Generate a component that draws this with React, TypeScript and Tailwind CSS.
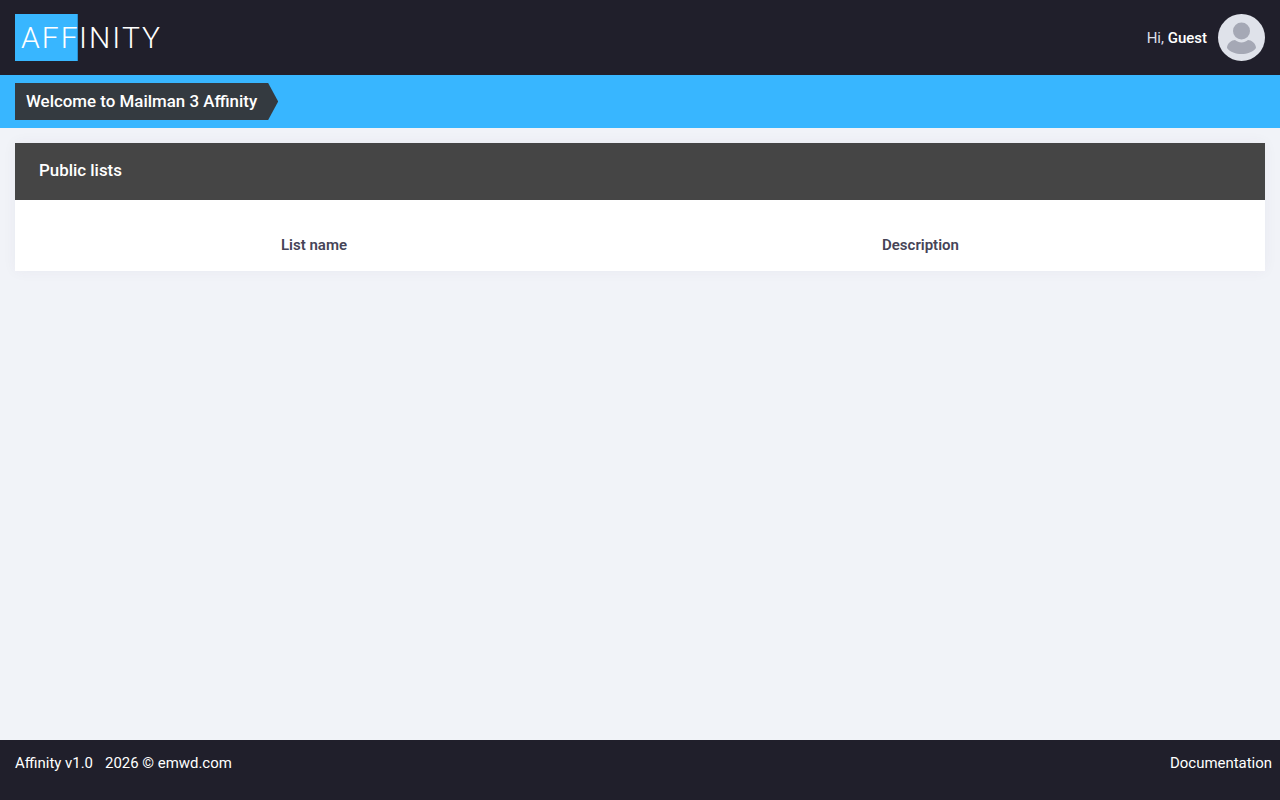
export default function App() {
  return (
    <div className="min-h-[800px] h-[800px] flex flex-col bg-[#f1f3f8] font-['Roboto',sans-serif] overflow-hidden">
      <header className="h-[75px] shrink-0 bg-[#201f2b] flex items-center justify-between px-[15px]">
        <div className="flex items-center h-[47px] text-[30px] font-light tracking-[2px] text-white leading-[47px]">
          <span className="bg-[#38b6ff] h-[47px] w-[63px] pl-[6px] border-r border-[#2a8fd0] whitespace-nowrap">AFF</span>
          <span className="pl-[1px]">INITY</span>
        </div>
        <div className="flex items-center">
          <span className="text-[15px] text-[#dcdfe8] pt-px">Hi,&nbsp;<b className="font-medium text-white">Guest</b></span>
          <div className="ml-[11px] w-[47px] h-[47px] rounded-full bg-[#dfe2ea] overflow-hidden">
            <svg viewBox="0 0 47 47" className="w-full h-full">
              <circle cx="23.5" cy="17" r="8.5" fill="#a5a8b5" />
              <path d="M9 34c0-5 5-8 8-8 2 1.500 4 2.500 6.500 2.500S28 27.500 30 26c3 0 8 3 8 8-3 4-9 6-14.500 6S12 38 9 34z" fill="#a5a8b5" />
            </svg>
          </div>
        </div>
      </header>
      <div className="h-[53px] shrink-0 bg-[#38b6ff] flex items-center px-[15px]">
        <div className="h-[37px] pl-[11px] pr-[21px] bg-[#343a40] text-white font-medium text-[16.9px] flex items-center [clip-path:polygon(0_0,calc(100%-10px)_0,100%_50%,calc(100%-10px)_100%,0_100%)]">
          Welcome to Mailman 3 Affinity
        </div>
      </div>
      <main className="flex-1 p-[15px]">
        <section className="bg-white shadow-[0_0_13px_0_rgba(82,63,105,0.05)]">
          <div className="h-[57px] bg-[#454545] flex items-center px-6 pb-px text-white font-medium text-[16.9px]">Public lists</div>
          <div className="h-[71px] grid grid-cols-[601px_1fr] pt-[34px] text-[15px] font-semibold text-[#464457]">
            <div className="pl-[266px]">List name</div>
            <div className="pl-[266px]">Description</div>
          </div>
        </section>
      </main>
      <footer className="h-[60px] shrink-0 bg-[#201f2b] text-white text-[14.95px] flex justify-between pl-[15px] pr-2 pt-3">
        <div className="flex gap-3"><span>Affinity v1.0</span><span>2026 © emwd.com</span></div>
        <span>Documentation</span>
      </footer>
    </div>
  );
}
